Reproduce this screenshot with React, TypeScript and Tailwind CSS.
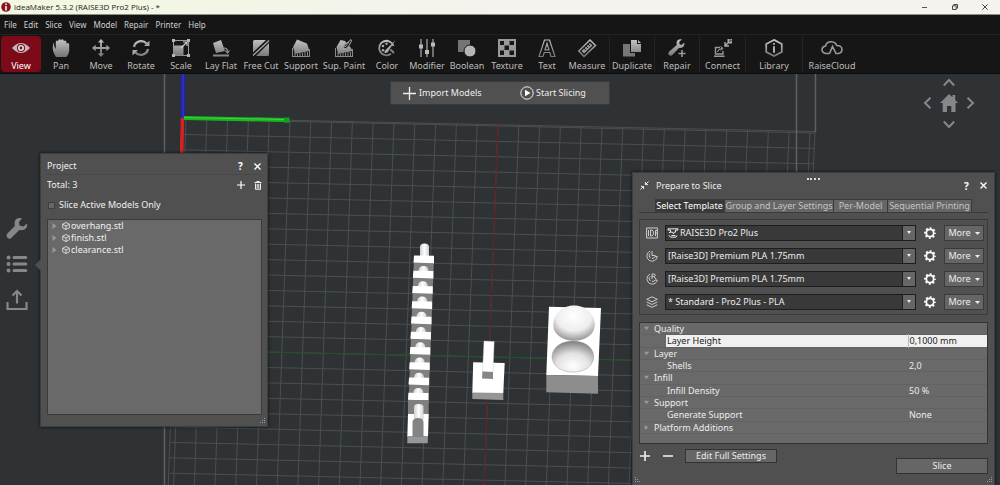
import React from "react";

const range = (from: number, to: number) =>
  Array.from({ length: to - from + 1 }, (_, i) => from + i);

const G = "url(#metal)";

const ToolIcon = ({ name }: { name: string }) => {
  switch (name) {
    case "View":
      return (
        <>
          <path d="M0 9Q9-1 18 9Q9 19 0 9Z" fill="#b9b9b9" />
          <circle cx="9" cy="9" r="4" fill="#7d0a18" />
          <circle cx="9" cy="9" r="3" fill="#e4e4e4" />
          <circle cx="9" cy="9" r="1.400" fill="#7d0a18" />
        </>
      );
    case "Pan":
      return (
        <path
          d="M4 18C2 15 .8 12 .8 9.500V7.600Q2-.1 2.200 7.300L3.800 10V2.600Q5 .4 6.200 2.600V1.200Q7.600-.8 9 1.200V1Q10.500-.6 11.800 1.400V2.400Q13.200.6 14.400 2.800V4.600Q16 3 17.200 5V12Q17 15 14.500 18Z"
          fill={G}
        />
      );
    case "Move":
      return (
        <path
          d="M9 0L12.200 3.600H9.900V8.100H14.400V5.800L18 9L14.400 12.200V9.900H9.900V14.400H12.200L9 18L5.800 14.400H8.100V9.900H3.600V12.200L0 9L3.600 5.800V8.100H8.100V3.600H5.800Z"
          fill={G}
        />
      );
    case "Rotate":
      return (
        <>
          <path d="M2 8A7.300 7.300 0 0 1 14.600 4.600M16 10A7.300 7.300 0 0 1 3.400 13.400" fill="none" stroke={G} strokeWidth="2.200" />
          <path d="M17.500 1.500V7H12ZM.5 16.500V11H6Z" fill="#aaa" />
        </>
      );
    case "Scale":
      return (
        <>
          <path d="M1.500 1.500H16.500V16.500H1.500Z" fill="none" stroke="#999" />
          <path d="M1.500 6.500H11.500V16.500H1.500Z" fill={G} />
          <path d="M9 9L15 3M15 7V3H11" fill="none" stroke="#ccc" strokeWidth="1.200" />
          <path d="M0 0H3V3H0ZM15 0H18V3H15ZM0 15H3V18H0ZM15 15H18V18H15Z" fill="#b5b5b5" />
        </>
      );
    case "Lay Flat":
      return (
        <>
          <path d="M1 4L9 1L13 12L4 14Z" fill={G} />
          <path d="M1 15.500H17V17.500H1Z" fill="#888" />
          <path d="M12 9Q15.500 9 15.500 12.500M13.500 11.500L15.500 14L17.500 11.500" fill="none" stroke="#999" strokeWidth="1.200" />
        </>
      );
    case "Free Cut":
      return (
        <>
          <path d="M2.500 1H14L1 13.500V2.500Q1 1 2.500 1ZM17 4V15.500Q17 17 15.500 17H4Z" fill={G} />
          <path d="M1 16.500L17 1.500" stroke="#aaa" strokeWidth="1.300" />
        </>
      );
    case "Support":
      return (
        <>
          <path d="M5 .5L15 4.500L17.500 12L3 15L1 8Z" fill={G} />
          <path d="M.5 9V17M3 14V17M5.500 15V17M8 14V17M10.500 14V17M13 13V17M15.500 13V17M17.500 10V17M0 17.500H18" stroke="#888" />
        </>
      );
    case "Sup. Paint":
      return (
        <>
          <path d="M5.500 1L10 2L16 9L17.500 12L3 15L1.500 8Z" fill={G} />
          <path d="M.5 9V17M3 14V17M5.500 15V17M8 14V17M10.500 14V17M13 13V17M15.500 13V17M17.500 10V17M0 17.500H18" stroke="#888" />
          <path d="M8.500 10Q8.500 5 12 4L16 .5L16.500 2L14 6.500Q12 10 8.500 10Z" fill="#161616" stroke="#aaa" />
          <path d="M10 8L14 3" stroke="#aaa" />
        </>
      );
    case "Color":
      return (
        <>
          <path d="M15.500 7A7.300 7.300 0 1 0 13 14.800M12 3.200Q9 .8 5.500 3" fill="none" stroke={G} strokeWidth="1.800" />
          <circle cx="5" cy="7" r="1.300" fill="#aaa" />
          <circle cx="8.500" cy="4.800" r="1.200" fill="#aaa" />
          <circle cx="5" cy="11.200" r="1.300" fill="#aaa" />
          <path d="M17.500 1L8 10.500Q6 11.500 6.500 14Q10 14 10.500 12Z" fill="#aaa" />
          <path d="M12.500 10.500L16 14" stroke="#888" strokeWidth="1.800" />
        </>
      );
    case "Modifier":
      return (
        <>
          <path d="M3 0V18M9 0V18M15 0V18" stroke="#888" strokeWidth="1.600" />
          <path d="M1 5.500H5V9.500H1ZM7 11H11V15H7ZM13 3.500H17V7.500H13Z" fill="#bbb" />
        </>
      );
    case "Boolean":
      return (
        <>
          <path d="M0 1H12V13H0Z" fill="#747474" />
          <circle cx="12" cy="12" r="6" fill="#b5b5b5" stroke="#161616" />
        </>
      );
    case "Texture":
      return (
        <>
          <path d="M0 0H18V18H0Z" fill="#9a9a9a" />
          <path d="M2 2H6V6H2ZM11.500 2H16V6H11.500ZM6.500 6.500H11V11H6.500ZM2 11.500H6V16H2ZM11.500 11.500H16V16H11.500Z" fill="#181818" />
        </>
      );
    case "Text":
      return (
        <path d="M6.500 1H11.500L17 17.500H13L11.800 13.500H6.200L5 17.500H1ZM9 4.500L7 10.800H11Z" fill="none" stroke={G} strokeWidth="1.200" />
      );
    case "Measure":
      return (
        <>
          <path d="M12 1L17.500 6.500L6 17.500L.8 12Z" fill="none" stroke={G} strokeWidth="1.500" />
          <path d="M12 4L14.500 6.500L6 14.500L3.500 12Z" fill="#999" />
          <path d="M10 5L12 7M8 7L10 9M6 9L8 11" stroke="#161616" />
        </>
      );
    case "Duplicate":
      return (
        <>
          <path d="M0 5H7V14H12V17.500H0Z" fill="#777" />
          <path d="M8 1H14V5H18V13H8Z" fill={G} />
          <path d="M15 1L18 4H15Z" fill="#bbb" />
        </>
      );
    case "Repair":
      return (
        <>
          <path
            d="M16.500 3.500L13.500 6L11.300 5L11.500 2.500L14 .5Q9.500-.5 8.500 3.500L8.700 6L1 12.800Q-.5 14.500 1 16Q2.800 17.500 4.300 16L11 9Q16.500 9.500 16.500 3.500Z"
            fill={G}
          />
          <path d="M14 11V18M10.500 14.500H17.500" stroke="#999" strokeWidth="1.600" />
        </>
      );
    case "Connect":
      return (
        <>
          <path d="M6 8.500H1.500V15H9V12M0 17.300H10.500" fill="none" stroke="#999" strokeWidth="1.400" />
          <path d="M3.500 13Q4 10 8 9.500M6.500 7.500L9 9.300L7 11.500" fill="none" stroke="#aaa" />
          <path d="M11 3V7H15M11.500 6.500L14 4" fill="none" stroke="#aaa" strokeWidth="1.400" />
          <path d="M13.500 0H18V4.500H13.500Z" fill="#aaa" />
          <path d="M15 3L17 1M17 3V1H15" fill="none" stroke="#333" strokeWidth=".7" />
        </>
      );
    case "Library":
      return (
        <>
          <path d="M9 .9L16.800 5V13L9 17.100L1.200 13V5Z" fill="none" stroke={G} strokeWidth="1.800" />
          <path d="M9 4V5.800M9 7.200V13.800" stroke="#b5b5b5" strokeWidth="1.900" />
        </>
      );
    default:
      return (
        <path
          d="M6.500 14.500H3Q-1 14-1 10.500Q-.8 7.500 2.500 7Q3.500 2.500 8.500 2.700Q12.500 3 13.800 6.500Q18.800 6.500 19 10.500Q18.800 14.200 15 14.500H13L9.500 7.500L6.500 14.500"
          fill="none"
          stroke="#999"
          strokeWidth="1.600"
        />
      );
  }
};

const tools = [
  { name: "View", box: "w-10" },
  { name: "Pan", box: "w-10" },
  { name: "Move", box: "w-10" },
  { name: "Rotate", box: "w-10" },
  { name: "Scale", box: "w-10" },
  { name: "Lay Flat", box: "w-10" },
  { name: "Free Cut", box: "w-10" },
  { name: "Support", box: "w-10" },
  { name: "Sup. Paint", box: "w-[46px]" },
  { name: "Color", box: "w-10" },
  { name: "Modifier", box: "w-10" },
  { name: "Boolean", box: "w-10" },
  { name: "Texture", box: "w-10" },
  { name: "Text", box: "w-10" },
  { name: "Measure", box: "w-10" },
  { name: "Duplicate", box: "w-[46px] ml-0.5 border-x border-[#242424]" },
  { name: "Repair", box: "w-[45px] border-r border-[#242424]" },
  { name: "Connect", box: "w-[46px] border-r border-[#242424]" },
  { name: "Library", box: "w-[57px] border-r border-[#242424]" },
  { name: "RaiseCloud", box: "w-[58px]" },
];

const TitleBar = () => (
  <header className="flex h-[15px] items-center border-b border-[#8b8e85] bg-linear-to-r from-[#f2f8e0] to-[#f4f3ee] to-50% pl-px text-[8px] text-[#222]">
    <svg viewBox="0 0 10 10" className="mr-[3px] size-[10px]">
      <circle cx="5" cy="5" r="4.800" fill="#8c1420" />
      <path d="M5 1.500V3M5 4V8.500" stroke="#fff" strokeWidth="1.500" />
    </svg>
    <h1 className="flex-1 font-['Open_Sans',sans-serif]">ideaMaker 5.3.2 (RAISE3D Pro2 Plus) - *</h1>
    <button aria-label="Minimize" className="flex w-[30px] justify-center">
      <svg viewBox="0 0 6 6" className="size-[6px]"><path d="M0 3.500H5" stroke="#555" /></svg>
    </button>
    <button aria-label="Restore" className="flex w-[30px] justify-center">
      <svg viewBox="0 0 6 6" className="size-[6px]" fill="none" stroke="#333" strokeWidth=".9">
        <path d="M.5 1.800H4.200V5.500H.5ZM1.800 1.500V.5H5.500V4.200H4.500" />
      </svg>
    </button>
    <button aria-label="Close" className="flex w-[30px] justify-center">
      <svg viewBox="0 0 6 6" className="size-[6px]"><path d="M.3.3L5.700 5.700M5.700.3L.3 5.700" stroke="#333" strokeWidth=".9" /></svg>
    </button>
  </header>
);

const MenuBar = () => (
  <nav className="flex h-[19px] items-center gap-[7px] bg-[#151515] px-1 text-[8px] text-[#d0d0d0]">
    {["File", "Edit", "Slice", "View", "Model", "Repair", "Printer", "Help"].map((m) => (
      <button key={m}>{m}</button>
    ))}
  </nav>
);

const Toolbar = () => (
  <div className="flex h-10 items-center border-y border-[#0c0c0c] border-t-[#222] bg-[#161616] pl-px text-[#bdbdbd]">
    <svg className="absolute size-0">
      <defs>
        <linearGradient id="metal" gradientUnits="userSpaceOnUse" x1="0" y1="0" x2="0" y2="18">
          <stop offset="0" stopColor="#c4c4c4" />
          <stop offset="1" stopColor="#747474" />
        </linearGradient>
      </defs>
    </svg>
    {tools.map((t) => (
      <button
        key={t.name}
        className={`flex h-[36px] shrink-0 flex-col items-center whitespace-nowrap pt-[3px] ${t.box} ${
          t.name === "View" ? "rounded-sm bg-[#7d0a18] text-white" : ""
        }`}
      >
        <svg viewBox="0 0 18 18" className="size-[18px] overflow-visible"><ToolIcon name={t.name} /></svg>
        <span className="mt-[3px] leading-3">{t.name}</span>
      </button>
    ))}
  </div>
);

// 3D print bed, seen from above
const Scene = () => (
  <svg viewBox="0 74 1000 411" preserveAspectRatio="xMidYMin slice" className="absolute inset-0 h-full w-full">
    <defs>
      <radialGradient id="dome" cx=".5" cy=".3" r=".7">
        <stop offset="0" stopColor="#fff" />
        <stop offset=".6" stopColor="#eee" />
        <stop offset="1" stopColor="#969696" />
      </radialGradient>
      <radialGradient id="bowl" cx=".5" cy=".8" r=".8">
        <stop offset="0" stopColor="#fff" />
        <stop offset=".5" stopColor="#e2e2e2" />
        <stop offset="1" stopColor="#7c7c7c" />
      </radialGradient>
      <linearGradient id="pin">
        <stop offset="0" stopColor="#d0d0d0" />
        <stop offset=".5" stopColor="#fff" />
        <stop offset="1" stopColor="#d0d0d0" />
      </linearGradient>
    </defs>
    <g stroke="#4b4f51" strokeWidth="1">
      {range(-15, 15).map((k) => (
        <line key={k} x1={498 + k * 20.8} y1={125 + k * 0.4} x2={484 + k * 20.7} y2="490" />
      ))}
      {range(-15, 9).map((k) => (
        <line key={k} x1={181 + (-15 - k) * 0.5} y1={350 + k * 15.4} x2={815 + (-15 - k) * 0.6} y2={364 + k * 15.4} />
      ))}
      <path d="M182 118L815 131.500L800 490M182 118L168 490" fill="none" />
    </g>
    <path d="M164.500 74V490M796.500 74V180M815.500 74V132" stroke="#5e6264" strokeWidth="1.500" />
    <line x1="498" y1="124" x2="484" y2="490" stroke="#6b1c20" />
    <line x1="174" y1="350" x2="808" y2="364" stroke="#1c5523" />
    <path d="M183 74V118" stroke="#1d1dc4" strokeWidth="4" />
    <path d="M183 74V118" stroke="#4040c8" strokeWidth="1" />
    <path d="M182.500 118L181.500 160" stroke="#dc1f24" strokeWidth="3.500" />
    <path d="M184 118L286 120" stroke="#19b51e" strokeWidth="4" />
    <path d="M184 117.500L284 119.500" stroke="#35d83a" strokeWidth="1" />
    <path d="M284 117.500H289.500V122.700H284Z" fill="#12a018" />

    {/* overhang.stl */}
    <path d="M420 256V247Q420 243.500 424.500 243.500Q429 243.500 429 247V256Z" fill="url(#pin)" />
    <path d="M414 257H434L428 416H408Z" fill="#808080" />
    {range(0, 9).map((i) => (
      <g key={i}>
        <path d="M418.500 271.500Q418.500 266 423.500 266Q428.500 266 428.500 271.500Z" transform={`translate(${-0.65 * i} ${15.25 * i})`} fill="url(#pin)" />
        <path d="M414 255.400L434 255.800V263.200L413.500 262.600Z" transform={`translate(${-0.62 * i} ${15.25 * i})`} fill="#fff" />
      </g>
    ))}
    <path d="M408 400H428.500V415H408Z" fill="#808080" />
    <path d="M408 414H428.700L428 437H407.300Z" fill="#fff" />
    <path d="M407.300 436H428L427.700 443.300H407.300Z" fill="#979797" />
    <path d="M414 420V407Q414 404 418.500 404Q423.500 404 423.500 407V420Z" fill="url(#pin)" />
    <path d="M412.500 437V422Q413 418 418 418Q423 418 423.500 422V437Z" fill="#848484" />

    {/* finish.stl */}
    <path d="M473.200 362.300L504.700 363L503.300 393H472.300Z" fill="#fff" />
    <path d="M472.300 392.500L503.300 393V400L472.300 399Z" fill="#959595" />
    <path d="M484 341L494.200 341.500L493 372H482.500Z" fill="#fff" stroke="#c4c4c4" strokeWidth=".4" />
    <path d="M482.500 371.500L493 372V379L482 378.500Z" fill="#868686" />

    {/* clearance.stl */}
    <path d="M549 306.700L601 308L598 376L546.300 375Z" fill="#fff" />
    <path d="M546.300 375L598 376V393.700L546.300 392.300Z" fill="#8d8d8d" />
    <path d="M553.200 325C554 299 594 299 594.800 325C594 346 554 346 553.200 325Z" fill="url(#dome)" />
    <path d="M552 356C554 336 592 336 593.700 356C594 377.500 552 377.500 552 356Z" fill="url(#bowl)" stroke="#999" strokeWidth=".5" />
  </svg>
);

const QuickBar = () => (
  <div className="absolute inset-x-0 top-[7px] mx-auto flex h-6 w-[220px] items-center border border-[#3a3a3a] bg-[#505050] px-3 text-[#eee]">
    <button className="flex flex-1 items-center gap-[3px]">
      <svg viewBox="0 0 14 14" className="size-[13px]"><path d="M7 0V14M0 7H14" stroke="#eee" strokeWidth="1.400" /></svg>
      Import Models
    </button>
    <button className="flex w-[77px] items-center gap-[2px]">
      <svg viewBox="0 0 14 14" className="size-[14px]">
        <circle cx="7" cy="7" r="6.200" fill="none" stroke="#eee" />
        <path d="M5 3.800L10.500 7L5 10.200Z" fill="#fff" />
      </svg>
      Start Slicing
    </button>
  </div>
);

const CameraPad = () => {
  const arrow = (label: string, d: string, cell: string) => (
    <button aria-label={label} className={`flex items-center justify-center ${cell}`}>
      <svg viewBox="0 0 12 12" className="size-3"><path d={d} fill="none" stroke="#85888a" strokeWidth="2" /></svg>
    </button>
  );
  return (
    <div className="absolute right-5 top-0 grid grid-cols-[21px_21px_21px] grid-rows-[18px_22px_20px]">
      {arrow("Tilt up", "M.8 8.500L6 3L11.200 8.500", "col-start-2 row-start-1")}
      {arrow("Rotate left", "M8.500.8L3 6L8.500 11.200", "col-start-1 row-start-2")}
      <button aria-label="Home" className="col-start-2 row-start-2 flex items-center justify-center">
        <svg viewBox="0 0 18 18" className="size-[18px]">
          <path d="M9 0L12.500 3.300V1H15.200V6L18 9H15.500V18H11.300V12H7V18H2.700V9H0Z" fill="#85888a" />
        </svg>
      </button>
      {arrow("Rotate right", "M3.500.8L9 6L3.500 11.200", "col-start-3 row-start-2")}
      {arrow("Tilt down", "M.8 3.500L6 9L11.200 3.500", "col-start-2 row-start-3")}
    </div>
  );
};

const SideBar = () => (
  <nav className="absolute left-[6px] top-[143px] flex flex-col gap-[14px]">
    <button aria-label="Setup">
      <svg viewBox="0 0 22 22" className="size-[22px]" fill="#85888a">
        <path d="M21 6.500L17.500 9.500L13.500 8.500L13 5L16 1.200Q10-.2 8.500 5L8.800 9L1.200 16.800Q-.2 19 1.500 20.800Q3.500 22.500 5.500 20.800L13 13.200L17 13Q22 11.500 21 6.500Z" />
      </svg>
    </button>
    <button aria-label="Project list">
      <svg viewBox="0 0 22 22" className="size-[22px]" stroke="#85888a" strokeWidth="3" strokeLinecap="round">
        <path d="M8 4.500H19.800M8 11H19.800M8 17.500H19.800" />
        <path d="M2.500 4.500H2.510M2.500 11H2.510M2.500 17.500H2.510" strokeWidth="4" />
      </svg>
    </button>
    <button aria-label="Export">
      <svg viewBox="0 0 22 22" className="size-[22px]" fill="none" stroke="#85888a" strokeWidth="2.200">
        <path d="M1.500 13V20H20.500V13M11 14.500V2M6.500 6.500L11 2L15.500 6.500" />
      </svg>
    </button>
  </nav>
);

const CloseHelp = () => (
  <div className="-mr-1 flex items-center">
    <button aria-label="Help" className="w-[17px] text-[10px] font-bold text-white">?</button>
    <button aria-label="Close" className="flex w-[17px] justify-center">
      <svg viewBox="0 0 7 7" className="size-[7px]"><path d="M.5.5L6.500 6.500M6.500.5L.5 6.500" stroke="#fff" strokeWidth="1.300" /></svg>
    </button>
  </div>
);

const Grip = ({ side }: { side: string }) => (
  <svg viewBox="0 0 6 6" className={`absolute bottom-[2px] size-[6px] ${side}`}>
    <path d="M4 0H5V1H4ZM4 2H5V3H4ZM2 2H3V3H2ZM0 4H1V5H0ZM2 4H3V5H2ZM4 4H5V5H4Z" fill="#999" />
  </svg>
);

const ProjectPanel = () => (
  <section className="absolute left-10 top-[79px] flex h-[274px] w-[228px] flex-col border border-[#3c3e3f] bg-[#505050] px-[5px] pb-[11px] text-[#f0f0f0] shadow-[0_0_3px_#111]">
    <svg viewBox="0 0 6 12" className="absolute -left-[6px] top-[105px] h-3 w-[6px]"><path d="M6 0V12L0 6Z" fill="#505050" /></svg>
    <div className="flex h-[21px] items-center border-b border-[#484848] pl-px pt-1">
      <h2 className="flex-1">Project</h2>
      <CloseHelp />
    </div>
    <div className="flex h-5 items-center pl-px">
      <span className="flex-1">Total: 3</span>
      <div className="-mr-1 flex items-center">
        <button aria-label="Add model" className="flex w-[17px] justify-center">
          <svg viewBox="0 0 8 8" className="size-2"><path d="M4 0V8M0 4H8" stroke="#fff" strokeWidth="1.200" /></svg>
        </button>
        <button aria-label="Delete model" className="flex w-[17px] justify-center">
          <svg viewBox="0 0 8 9" className="h-[9px] w-2">
            <path d="M.5 1.500H7.500M2.800 1.200V.5H5.200V1.200M1.500 2.500V8.300H6.500V2.500M3.200 3V7.500M4.800 3V7.500" fill="none" stroke="#fff" strokeWidth=".9" />
          </svg>
        </button>
      </div>
    </div>
    <label className="flex h-5 items-center gap-1 pl-[2px]">
      <input type="checkbox" className="size-[7px] appearance-none border border-[#3e3e3e] bg-[#666]" />
      Slice Active Models Only
    </label>
    <ul className="ml-px mt-1 flex-1 border border-[#3a3a3a] bg-[#696969]">
      {["overhang.stl", "finish.stl", "clearance.stl"].map((f) => (
        <li key={f} className="flex h-3 items-center pl-1">
          <svg viewBox="0 0 5 6" className="mr-[5px] h-[6px] w-[5px]"><path d="M.5 0L4.500 3L.5 6Z" fill="#999" /></svg>
          <svg viewBox="0 0 8 8" className="mr-px size-2" fill="none" stroke="#eee" strokeWidth=".8">
            <path d="M4 .5L7.300 2.200V5.800L4 7.500L.7 5.800V2.200ZM.7 2.200L4 4L7.300 2.200M4 4V7.500" />
          </svg>
          {f}
        </li>
      ))}
    </ul>
    <Grip side="right-[1px]" />
  </section>
);

const Printer = () => (
  <path d="M0 1H12V2.500H9V5H7.500L6.500 7L5.500 5H3V2.500H0ZM1 5.500H3M1 8.500L3 11H9.500L11 9M4 9H9" fill="none" stroke="currentColor" strokeWidth="1.200" />
);

const templates = [
  {
    label: "Printer",
    value: "RAISE3D Pro2 Plus",
    icon: <path d="M.6 1H11.400V11H.6ZM2.500 3V9M4.500 3V9H6Q7.500 8 7.500 6Q7.500 4 6 3ZM9.500 9V3.500H11M9.500 6H11" />,
  },
  {
    label: "Left filament",
    value: "[Raise3D] Premium PLA 1.75mm",
    icon: <path d="M4 1.200A5.200 5.200 0 1 0 11.300 6.500H9Q8 8.800 6 8.500M6 1V5.500H9.500M4 3.500A3 3 0 0 0 4.500 8" />,
  },
  {
    label: "Right filament",
    value: "[Raise3D] Premium PLA 1.75mm",
    icon: <path d="M4 1.200A5.200 5.200 0 1 0 11.300 7H9Q8 8.800 6 8.500M6 6V1H8.500Q10 2.300 8.500 3.500H6M8 3.500L10 6M4 3.500A3 3 0 0 0 4.500 8" />,
  },
  {
    label: "Slicing template",
    value: "* Standard - Pro2 Plus - PLA",
    icon: <path d="M6 .8L11.300 3.300L6 5.800L.7 3.300ZM.7 6L6 8.500L11.300 6M.7 8.800L6 11.300L11.300 8.800" />,
  },
];

const TemplateRow = ({ t, first }: { t: (typeof templates)[0]; first: boolean }) => (
  <div className="flex h-[23px] items-center">
    <svg viewBox="0 0 12 12" className="mr-[7px] size-3" fill="none" stroke="#ccc">{t.icon}</svg>
    <div className="relative flex h-4 flex-1">
      <select
        aria-label={t.label}
        className={`h-4 w-full appearance-none border border-[#1e1e1e] bg-[#393939] leading-[14px] ${first ? "pl-[14px]" : "pl-[2px]"}`}
      >
        <option>{t.value}</option>
      </select>
      {first && (
        <svg viewBox="0 0 12 12" className="absolute left-[3px] top-[3px] size-[10px] overflow-visible"><Printer /></svg>
      )}
      <span className="pointer-events-none absolute right-0 top-0 flex h-4 w-[14px] items-center justify-center border border-[#1e1e1e] bg-[#666]">
        <svg viewBox="0 0 4 3" className="h-[3px] w-1"><path d="M0 0H4L2 3Z" fill="#eee" /></svg>
      </span>
    </div>
    <button aria-label={`${t.label} settings`} className="mx-[8px]">
      <svg viewBox="0 0 12 12" className="size-3" fill="none" stroke="#fff">
        <circle cx="6" cy="6" r="3.700" strokeWidth="1.800" />
        <circle cx="6" cy="6" r="5" strokeWidth="1.700" strokeDasharray="2 1.927" strokeDashoffset="1" />
      </svg>
    </button>
    <button className="flex h-4 w-10 items-center justify-center gap-1 border border-[#3a3a3a] bg-[#666]">
      More
      <svg viewBox="0 0 5 3" className="mt-[2px] h-[3px] w-[5px]"><path d="M0 0H5L2.500 3Z" fill="#eee" /></svg>
    </button>
  </div>
);

const settings = [
  { group: "Quality" },
  { name: "Layer Height", value: "0,1000 mm", active: true },
  { group: "Layer" },
  { name: "Shells", value: "2,0" },
  { group: "Infill" },
  { name: "Infill Density", value: "50 %" },
  { group: "Support" },
  { name: "Generate Support", value: "None" },
  { group: "Platform Additions", closed: true },
];

const tabs = [
  { name: "Select Template", box: "w-[70px] bg-[#393939] text-white" },
  { name: "Group and Layer Settings", box: "w-[109px] bg-[#666] text-[#c4c4c4]" },
  { name: "Per-Model", box: "w-[54px] bg-[#666] text-[#c4c4c4]" },
  { name: "Sequential Printing", box: "w-[84px] bg-[#666] text-[#c4c4c4]" },
];

const SlicePanel = () => (
  <section className="absolute right-[5px] top-[98px] flex w-[363px] flex-col border border-[#3c3e3f] bg-[#505050] px-[6px] pb-[11px] text-[#ececec] shadow-[0_0_3px_#111]">
    <div className="absolute inset-x-0 top-[5px] mx-auto w-[13px] border-t-2 border-dotted border-[#ddd]" />
    <div className="flex h-[21px] items-center pt-1">
      <svg viewBox="0 0 10 10" className="mr-[7px] ml-px size-[9px]" fill="none" stroke="#eee" strokeWidth="1.100">
        <path d="M6 1V4H9M6 4L9.500.5M1 6H4V9M4 6L.5 9.500" />
      </svg>
      <h2 className="flex-1">Prepare to Slice</h2>
      <CloseHelp />
    </div>
    <div role="tablist" className="mt-[5px] flex h-[14px] border-b border-[#3a3a3a] pl-4">
      {tabs.map((t, i) => (
        <button
          key={t.name}
          role="tab"
          aria-selected={i === 0}
          className={`flex h-[14px] shrink-0 items-center justify-center whitespace-nowrap border border-[#3a3a3a] border-l-0 ${t.box}`}
        >
          {t.name}
        </button>
      ))}
    </div>
    <div className="mt-[6px] border border-[#3a3a3a] py-px pl-[6px] pr-[3px]">
      {templates.map((t, i) => (
        <TemplateRow key={t.label} t={t} first={i === 0} />
      ))}
    </div>
    <div className="mt-[7px] h-[122px] border border-[#333] bg-[#696969]">
      <table className="h-[111px] w-full border-collapse">
        <tbody>
          {settings.map((s) =>
            s.group ? (
              <tr key={s.group} className="border-b border-[#626262]">
                <td colSpan={3} className="p-0 pl-1">
                  <span className="flex items-center gap-[5px] leading-[11px]">
                    <svg viewBox="0 0 6 6" className="size-[5px]">
                      <path d={s.closed ? "M1 0L5 3L1 6Z" : "M0 1H6L3 5Z"} fill="#999" />
                    </svg>
                    {s.group}
                  </span>
                </td>
              </tr>
            ) : (
              <tr key={s.name} className="border-b border-[#626262]">
                <td className="w-[26px] p-0" />
                <td className={`p-0 pl-px leading-[11px] ${s.active ? "bg-[#f0f0f0] text-[#222]" : ""}`}>{s.name}</td>
                <td className={`w-[79px] p-0 pl-px leading-[11px] ${s.active ? "border-l border-[#bbb] bg-[#f0f0f0] text-[#222]" : ""}`}>
                  {s.value}
                </td>
              </tr>
            )
          )}
        </tbody>
      </table>
    </div>
    <div className="flex items-start pt-[5px]">
      <button aria-label="Add setting" className="mr-[13px] ml-px mt-[2px]">
        <svg viewBox="0 0 10 10" className="size-[10px]"><path d="M5 0V10M0 5H10" stroke="#eee" strokeWidth="1.600" /></svg>
      </button>
      <button aria-label="Remove setting" className="mr-3 mt-[2px]">
        <svg viewBox="0 0 10 10" className="size-[10px]"><path d="M0 5H10" stroke="#eee" strokeWidth="1.600" /></svg>
      </button>
      <button className="h-[14px] w-[92px] border border-[#333] bg-[#666] leading-3">Edit Full Settings</button>
      <button className="mt-[9px] ml-auto h-4 w-[92px] border border-[#333] bg-[#666] leading-[14px]">Slice</button>
    </div>
    <Grip side="right-[1px]" />
    <Grip side="left-[1px] -scale-x-100" />
  </section>
);

const App = () => {
  return (
    <div className="flex min-h-screen flex-col overflow-hidden bg-[#2e3235] font-['Noto_Sans',sans-serif] text-[9px] leading-3">
      <TitleBar />
      <MenuBar />
      <Toolbar />
      <main className="relative min-h-[411px] flex-1 overflow-hidden">
        <Scene />
        <QuickBar />
        <CameraPad />
        <SideBar />
        <ProjectPanel />
        <SlicePanel />
      </main>
    </div>
  );
};

export default App;
